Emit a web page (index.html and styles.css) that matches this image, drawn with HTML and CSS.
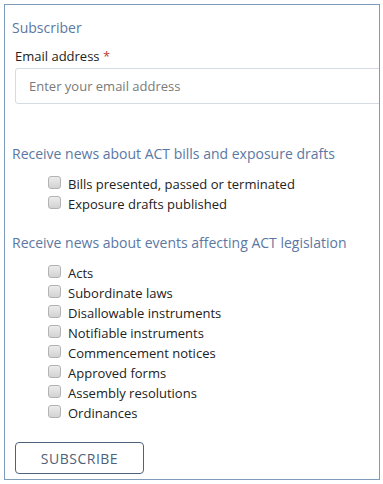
FILE: index.html
```html
<!DOCTYPE html>
<html lang="en">
<head>
  <meta charset="UTF-8" />
  <meta name="viewport" content="width=device-width, initial-scale=1.0"/>
  <title>Subscribe</title>
  <link rel="stylesheet" href="styles.css">
</head>
<body>
  <form class="panel">
    <div class="legend">Subscriber</div>

    <label class="field-label" for="email">Email address <span class="req">*</span></label>
    <input class="email" id="email" type="email" placeholder="Enter your email address">

    <div class="group-title first">Receive news about ACT bills and exposure drafts</div>
    <ul class="options">
      <li><label><input type="checkbox"> Bills presented, passed or terminated</label></li>
      <li><label><input type="checkbox"> Exposure drafts published</label></li>
    </ul>

    <div class="group-title">Receive news about events affecting ACT legislation</div>
    <ul class="options">
      <li><label><input type="checkbox"> Acts</label></li>
      <li><label><input type="checkbox"> Subordinate laws</label></li>
      <li><label><input type="checkbox"> Disallowable instruments</label></li>
      <li><label><input type="checkbox"> Notifiable instruments</label></li>
      <li><label><input type="checkbox"> Commencement notices</label></li>
      <li><label><input type="checkbox"> Approved forms</label></li>
      <li><label><input type="checkbox"> Assembly resolutions</label></li>
      <li><label><input type="checkbox"> Ordinances</label></li>
    </ul>

    <button class="subscribe" type="button">SUBSCRIBE</button>
  </form>
</body>
</html>
```

FILE: styles.css
```css
* { box-sizing: border-box; margin: 0; padding: 0; }

body {
  background: #fff;
  font-family: 'Open Sans', sans-serif;
  color: #222;
}

.panel {
  margin: 4px;
  width: 376px;
  height: 476px;
  border: 1px solid #7f9bba;
  padding: 13px 0 0 7px;
  overflow: hidden;
  display: flex;
  flex-direction: column;
  align-items: flex-start;
}

.legend {
  font-size: 14px;
  line-height: 20px;
  color: #5b78a3;
}

.field-label {
  margin: 8px 0 2px 3px;
  font-size: 13px;
  line-height: 20px;
  color: #222;
}

.req { color: #c0392b; }

.email {
  margin-left: 3px;
  width: 380px;
  height: 36px;
  border: 1px solid #d6dbe1;
  border-radius: 3px;
  padding: 0 13px;
  font-family: inherit;
  font-size: 13px;
  color: #333;
}

.email::placeholder { color: #7a7a7a; }

.group-title {
  margin-top: 19px;
  font-size: 14px;
  line-height: 20px;
  color: #5b78a3;
}

.group-title.first { margin-top: 40px; }

.options {
  list-style: none;
  margin-top: 10px;
  padding-left: 36px;
}

.options li {
  font-size: 13px;
  line-height: 20px;
}

.options label {
  display: flex;
  align-items: center;
  gap: 7px;
}

.options input {
  appearance: none;
  width: 13px;
  height: 13px;
  border: 1px solid #b3b3b3;
  border-radius: 3px;
  background: linear-gradient(#ececec, #d2d2d2);
  margin-top: -4px;
}

.subscribe {
  margin: 19px 0 0 3px;
  width: 129px;
  height: 32px;
  border: 1px solid #4f627c;
  border-radius: 4px;
  background: #fff;
  font-family: inherit;
  font-size: 14px;
  letter-spacing: 0.5px;
  color: #4f5f77;
}
```
